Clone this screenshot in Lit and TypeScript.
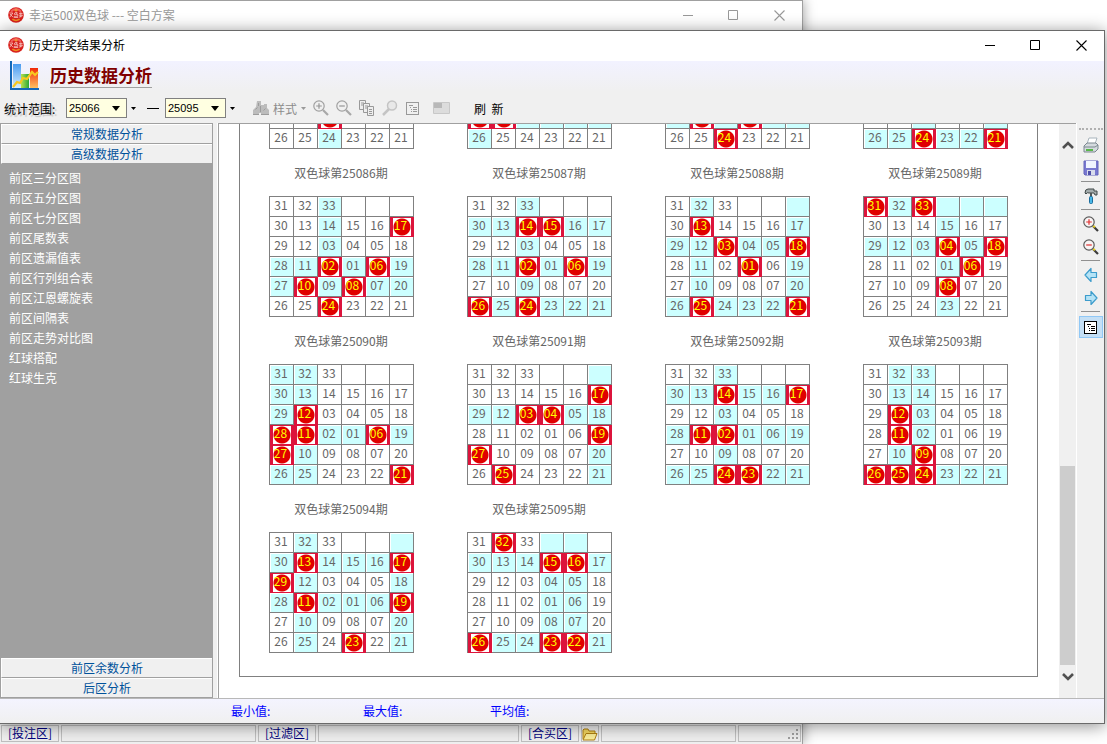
import { LitElement, html, css, svg } from "lit";
import { customElement, property } from "lit/decorators.js";

const BOARD: (number | null)[][] = [
  [31, 32, 33, null, null, null],
  [30, 13, 14, 15, 16, 17],
  [29, 12, 3, 4, 5, 18],
  [28, 11, 2, 1, 6, 19],
  [27, 10, 9, 8, 7, 20],
  [26, 25, 24, 23, 22, 21],
];

const DRAWS: { issue: string; balls: number[] }[] = [
  { issue: "25082", balls: [31, 14, 16, 12, 1, 9] },
  { issue: "25083", balls: [27, 10, 30, 3, 4, 19] },
  { issue: "25084", balls: [10, 8, 24, 30, 5, 19] },
  { issue: "25085", balls: [24, 21, 3, 17, 12, 1] },
  { issue: "25086", balls: [17, 2, 6, 10, 8, 24] },
  { issue: "25087", balls: [14, 15, 2, 6, 26, 24] },
  { issue: "25088", balls: [13, 3, 18, 1, 25, 21] },
  { issue: "25089", balls: [31, 33, 4, 18, 6, 8] },
  { issue: "25090", balls: [12, 28, 11, 6, 27, 21] },
  { issue: "25091", balls: [17, 3, 4, 19, 27, 25] },
  { issue: "25092", balls: [14, 17, 11, 2, 24, 23] },
  { issue: "25093", balls: [12, 11, 9, 26, 25, 24] },
  { issue: "25094", balls: [13, 17, 29, 11, 19, 23] },
  { issue: "25095", balls: [32, 15, 16, 26, 23, 22] },
];

const ITEMS = [
  "前区三分区图", "前区五分区图", "前区七分区图", "前区尾数表", "前区遗漏值表", "前区行列组合表",
  "前区江恩螺旋表", "前区间隔表", "前区走势对比图", "红球搭配", "红球生克",
];

const icon = (body: unknown, w = 16, h = 16) =>
  html`<svg width=${w} height=${h} viewBox="0 0 ${w} ${h}" aria-hidden="true">${body}</svg>`;

const logo = icon(svg`
  <circle cx="8" cy="8" r="7.8" fill="#d8201c"/>
  <path d="M3 4.6Q8-.6 13 4.6" fill="none" stroke="#f0605c" stroke-width="2"/>
  <path d="M6.3 3.2h3.4M8 1.8v3" stroke="#f6a03a" stroke-width="1"/>
  <path d="M1.4 6h3.4l-3 4.2M2 7l3 3.2M6.2 7.2l1-1.6h2l-.8 1.6M6.2 7.3h3.6v2H6.2v1.2h4M11 6.4h3.6M11 8.2h3.6M12.8 5.4v5M11 10.2l3.6-1.6" fill="none" stroke="#f6c9c4" stroke-width=".8"/>
  <path d="M4.4 12.2q3.6 2.6 7.2 0" fill="none" stroke="#f08a20" stroke-width="1.6"/>`);

const zoomIcon = (plus: boolean, dim: boolean) => icon(svg`
  <path d="M10 10l5 5" stroke=${dim ? "#a8a8a8" : "#3c3c3c"} stroke-width="2.2"/>
  ${dim ? "" : svg`<path d="M10.2 9.8l1.600 1.600" stroke="#e8d020" stroke-width="2"/>`}
  <circle cx="6" cy="6" r="5.200" fill=${dim ? "#f0f0f0" : "#f8f4f4"} stroke=${dim ? "#a0a0a0" : "#5a5a5a"} stroke-width="1.2"/>
  <path d=${plus ? "M3.2 6h5.6M6 3.2v5.6" : "M3.2 6h5.6"} stroke=${dim ? "#969696" : "#e03030"} stroke-width="1.2"/>`);

const listIcon = (c: string, bg: string) => icon(svg`
  <rect x="1.5" y="2.5" width="12" height="12" fill=${bg} stroke=${c}/>
  <path d="M4 5.5h4M5 7.5h1M8 7.5h4M6 9.5h1M8 9.5h4M8 11.5h4M6 11.5h1" stroke=${c}/>`);

const arrowIcon = (d: string) => icon(svg`<path d=${d} fill="#b5e3f6" stroke="#3c9ccc" stroke-width="1.2" stroke-linejoin="round"/>`);

const winButtons = html`
  <button aria-label="最小化">${icon(svg`<path d="M1 5.5h10" stroke="currentColor"/>`, 11, 11)}</button>
  <button aria-label="最大化">${icon(svg`<path d="M.5.5h9v9h-9z" fill="none" stroke="currentColor"/>`, 11, 11)}</button>
  <button aria-label="关闭">${icon(svg`<path d="M.5.5l10 10M10.5.5l-10 10" stroke="currentColor" stroke-width="1.1"/>`, 11, 11)}</button>`;

@customElement("draw-board")
class DrawBoard extends LitElement {
  @property() issue = "";
  @property({ attribute: false }) balls: number[] = [];

  static styles = css`
    :host { display: flex; flex-direction: column; align-items: center; color: #666; }
    .name { margin: 13px 0 12px; font-size: 12px; line-height: 22px; font-weight: 400; }
    .board { border-collapse: separate; border-spacing: 0; table-layout: fixed; width: 145px;
      border: solid #808080; border-width: 1px 0 0 1px; font-size: 12px; line-height: 16px; }
    .cell { box-sizing: border-box; width: 24px; height: 20px; padding: 0 0 3px; text-align: center;
      border: solid #808080; border-width: 0 1px 1px 0; background: #fff; }
    .lit { background: #cff; box-shadow: inset 1px 1px #fff; }
    .hit { background: #dc143c; border-color: #dc143c; padding: 1px 2px 0 3px; }
    .ball { display: block; height: 18px; line-height: 14px; color: #ff0; text-indent: -2px;
      background: radial-gradient(circle at center, #e00000 8px, #fff 9px); }
  `;

  render() {
    const hit = (n: number | null) => n !== null && this.balls.includes(n);
    const rows = BOARD.map((r) => r.filter(hit).length > 1);
    const cols = BOARD[0].map((_, c) => BOARD.filter((r) => hit(r[c])).length > 1);
    return html`
      <h2 class="name">双色球第${this.issue}期</h2>
      <table class="board"><tbody>
        ${BOARD.map((r, i) => html`<tr>${r.map((n, c) => {
          const label = n === null ? "" : String(n).padStart(2, "0");
          return hit(n)
            ? html`<td class="cell hit"><span class="ball">${label}</span></td>`
            : html`<td class="cell ${rows[i] || cols[c] ? "lit" : ""}">${label}</td>`;
        })}</tr>`)}
      </tbody></table>`;
  }
}

@customElement("app-root")
class AppRoot extends LitElement {
  static styles = css`
    :host { display: block; font-family: "Noto Sans CJK SC", sans-serif; font-size: 12px; }
    * { box-sizing: border-box; }
    svg { display: block; flex: none; }
    button { font: inherit; color: inherit; background: none; border: 0; padding: 0; margin: 0; }
    .desktop { display: grid; height: 100vh; min-height: 480px; background: #fff; overflow: hidden; }
    .back, .front { grid-area: 1 / 1; display: flex; flex-direction: column; min-width: 0; min-height: 0; }
    .back { width: 803px; border: solid #a0a0a0; border-width: 1px 1px 0 0; color: #999;
      justify-content: space-between; background: #f0f0f0; box-shadow: 0 0 12px rgba(0, 0, 0, .4); }
    .front { position: relative; margin: 30px 2px 20px 0; border: 1px solid #6a6a6a; border-left: 0;
      background: #f0f0f0; box-shadow: 0 2px 16px rgba(0, 0, 0, .45); }
    .titlebar { display: flex; align-items: center; height: 30px; flex: none; background: #fff; padding: 0 0 2px 8px; }
    .caption { flex: 1; margin: 0 0 0 5px; font-size: 12px; font-weight: 400; line-height: 18px; }
    .winbtns { display: flex; }
    .winbtns button { width: 46px; height: 28px; display: grid; place-items: center; }

    .header { flex: none; background: linear-gradient(#f2f2ff 0, #f0f0f0 30px); }
    .brand { display: flex; gap: 10px; padding-left: 10px; height: 30px; }
    .brand h1 { margin: 0; font-size: 17px; line-height: 28px; height: 27px; font-weight: 700; color: #800000; border-bottom: 1px solid #a0a0a0; }
    .tools { display: flex; align-items: center; height: 32px; padding: 2px 0 0 4px; }
    .label { width: 62px; text-shadow: 2px 2px 1px #c4c4c4; white-space: nowrap; }
    .pick { display: flex; align-items: center; }
    .pick select { appearance: none; width: 61px; height: 20px; border: 1px solid #808080; border-radius: 0; margin: 0;
      background: #ffffe1; padding: 0 2px; font: 11px "Liberation Sans", sans-serif; color: #000; }
    .pick svg { margin-left: -15px; pointer-events: none; }
    .pick button { margin-left: 11px; width: 6px; }
    .pick button svg, .style svg { margin: 0; }
    .dash { width: 12px; height: 1px; background: #000; margin: 0 6px 0 10px; }
    .faded { display: flex; align-items: center; gap: 7px; margin-left: 17px; color: #8c8c8c; }
    .style { display: flex; align-items: center; gap: 4px; }
    .refresh { margin-left: 24px; }

    .body { flex: 1; min-height: 0; display: grid; grid-template-columns: 213px 5px minmax(0, 1fr) 17px 1px 27px; }
    .side { display: flex; flex-direction: column; border: 1px solid #a0a0a0; background: #a0a0a0; min-height: 0; }
    .side .tab { flex: none; height: 20px; line-height: 18px; text-align: center; color: #00529b; background: #f0f0f0;
      border-top: 1px solid #fff; border-left: 1px solid #fff; border-bottom: 1px solid #a0a0a0; }
    .side .tab:last-child { border-bottom: 0; height: 19px; }
    .menu { flex: 1; list-style: none; margin: 0; padding: 4px 8px; overflow: hidden; }
    .menu a { display: block; line-height: 20px; color: #fff; text-decoration: none; }
    .split { border-right: 1px solid #fff; background: #f0f0f0; }
    .view { display: flex; flex-direction: column; justify-content: flex-end; overflow: hidden; background: #fff;
      border: solid #a0a0a0; border-width: 1px 0 0 1px; padding: 0 21px 21px 20px; min-height: 0; }
    .sheet { border: 1px solid #808080; padding: 0 3px 23px 2px; display: grid; grid-template-columns: repeat(4, 1fr); flex: none; }
    .scroll { display: flex; flex-direction: column; border-top: 1px solid #a0a0a0; padding: 13px 1px; align-items: center; }
    .scroll button { height: 16px; display: grid; place-items: center; }
    .gap { flex: 312; }
    .thumb { flex: 199; align-self: stretch; background: #cdcdcd; margin-bottom: 4px; }
    .white { background: #fff; }
    .rail { display: flex; flex-direction: column; align-items: center; gap: 3px; padding-top: 5px; }
    .dots { width: 24px; border-top: 2px dotted #b0b0b0; margin-bottom: 2px; }
    .rail button { height: 20px; width: 24px; display: grid; place-items: center; }
    .rail hr { width: 19px; height: 1px; border: 0; background: #909090; margin: 0 0 1px; }
    .rail .on { background: #c4dff5; border: 1px solid #90c8f6; height: 22px; }
    .summary { flex: none; display: flex; height: 25px; line-height: 24px; border-top: 1px solid #b8b8b8; padding-left: 231px;
      color: #00f; background: linear-gradient(#f4f4ff, #f0f0f0); }
    .summary span { width: 132px; }
    .summary span + span { width: 127px; }
    .status { display: flex; height: 19px; gap: 2px; padding: 0 1px; color: #000080; }
    .status > * { border: 1px solid #c0c0c0; height: 17px; line-height: 14px; white-space: nowrap; flex: none; }
    .zone { width: 58px; text-align: center; }
    .w1 { width: 195px; }
    .w2 { width: 201px; }
    .w3 { width: 18px; display: grid; place-items: center; }
    .w4 { flex: 1; }
    .w5 { width: 63px; display: flex; justify-content: flex-end; }
  `;

  private picker(id: string, value: string) {
    return html`<span class="pick">
      <select id=${id} aria-label=${"期号 " + value}><option>${value}</option></select>
      ${icon(svg`<path d="M0 0h8L4 5z"/>`, 8, 5)}
      <button aria-label="选择">${icon(svg`<path d="M0 1h5L2.500 4z"/>`, 5, 5)}</button>
    </span>`;
  }

  render() {
    const binoculars = icon(svg`<path d="M4 1h4v4h3V4h3v4l2 2v5H8v-2H6v2H0v-5l3-3z" fill="#bcbcbc"/><path d="M2.500 9.500l2-2M7.500 6v6M10.500 10.500l2-2M5.500 3v3M0 14.500h6M8 14.500h8" stroke="#9c9c9c"/>`);
    const pages = icon(svg`<g fill="#eee" stroke="#999"><path d="M.5.500h6v9h-6z"/><path d="M4.500 3.500h6v9h-6z"/><path d="M8.500 6.500h6v9h-6z"/></g><path d="M2 3h3M2 5h2M6 6h3M6 8h2M10 9.500h3M10 11.500h3M10 13.500h3" stroke="#999"/>`);
    return html`<div class="desktop">
      <section class="back">
        <header class="titlebar">${logo}<p class="caption">幸运500双色球 --- 空白方案</p><div class="winbtns">${winButtons}</div></header>
        <footer class="status">
          <span class="zone">[投注区]</span><span class="w1"></span>
          <span class="zone">[过滤区]</span><span class="w2"></span>
          <span class="zone">[合买区]</span>
          <span class="w3">${icon(svg`<path d="M1 12V3l1-1h4l1 2h6v3" fill="#f5d860" stroke="#b08010"/><path d="M1 13L4 6.500h11L12.500 13z" fill="#fbee9a" stroke="#b08010"/>`, 16, 14)}</span>
          <span class="w4"></span>
          <span class="w5">${icon(svg`<path d="M9 3h2v2H9zM9 7h2v2H9zM9 11h2v2H9zM5 7h2v2H5zM5 11h2v2H5zM1 11h2v2H1z" fill="#a0a0a0"/>`, 13, 14)}</span>
        </footer>
      </section>

      <section class="front">
        <header class="titlebar">${logo}<p class="caption">历史开奖结果分析</p><div class="winbtns">${winButtons}</div></header>
        <div class="header">
          <div class="brand">
            <svg width="30" height="30" viewBox="0 0 30 30" aria-hidden="true">
              <defs>
                <linearGradient id="b" x2="0" y2="1"><stop stop-color="#4a9cf0"/><stop offset="1" stop-color="#d8f0ff"/></linearGradient>
                <linearGradient id="g" x2="1"><stop stop-color="#b8e050"/><stop offset="1" stop-color="#28a838"/></linearGradient>
                <linearGradient id="r" x2="0" y2="1"><stop stop-color="#f02808"/><stop offset="1" stop-color="#ffc060"/></linearGradient>
              </defs>
              <path d="M3 3h8v24H3z" fill="url(#b)"/><path d="M11 13h8v14h-8z" fill="url(#g)"/><path d="M20 7h8v20h-8z" fill="url(#r)"/>
              <path d="M3 26l4-5 3 1 3-5 4 1 5-7 3 3 3-3" fill="none" stroke="#f8c820" stroke-width="2.200"/>
              <path d="M1 0v28h28" fill="none" stroke="#1468b8" stroke-width="2"/>
            </svg>
            <h1>历史数据分析</h1>
          </div>
          <div class="tools">
            <label class="label" for="from">统计范围:</label>
            ${this.picker("from", "25066")}<span class="dash"></span>${this.picker("to", "25095")}
            <div class="faded">
              <button class="style">${binoculars}样式${icon(svg`<path d="M0 1h5L2.500 4z" fill="#999"/>`, 5, 5)}</button>
              <button aria-label="放大">${zoomIcon(true, true)}</button>
              <button aria-label="缩小">${zoomIcon(false, true)}</button>
              <button aria-label="页面">${pages}</button>
              <button aria-label="查找">${icon(svg`<path d="M7 9l-6 6" stroke="#c4c4c4" stroke-width="2.500"/><circle cx="10" cy="5.500" r="4.500" fill="#e8e8e8" stroke="#c4c4c4" stroke-width="1.500"/>`)}</button>
              <button aria-label="列表">${listIcon("#999", "#f0f0f0")}</button>
              <button aria-label="图块">${icon(svg`<path d="M5.500 2.500h16v11h-16z" fill="#dcdcdc" stroke="#c8c8c8"/><path d="M6 3h8v5H6z" fill="#b8b8b8"/>`, 22, 16)}</button>
            </div>
            <button class="refresh">刷&nbsp; 新</button>
          </div>
        </div>

        <div class="body">
          <nav class="side">
            <button class="tab">常规数据分析</button>
            <button class="tab">高级数据分析</button>
            <ul class="menu">${ITEMS.map((t) => html`<li><a href="#">${t}</a></li>`)}</ul>
            <button class="tab">前区余数分析</button>
            <button class="tab">后区分析</button>
          </nav>
          <div class="split"></div>
          <main class="view"><div class="sheet">
            ${DRAWS.map((d) => html`<draw-board .issue=${d.issue} .balls=${d.balls}></draw-board>`)}
          </div></main>
          <div class="scroll">
            <button aria-label="向上">${icon(svg`<path d="M1 8l5-5 5 5" fill="none" stroke="#505050" stroke-width="2.600"/>`, 12, 10)}</button>
            <div class="gap"></div><div class="thumb"></div>
            <button aria-label="向下">${icon(svg`<path d="M1 2l5 5 5-5" fill="none" stroke="#505050" stroke-width="2.600"/>`, 12, 10)}</button>
          </div>
          <div class="white"></div>
          <div class="rail">
            <div class="dots"></div>
            <button aria-label="打印">${icon(svg`<path d="M4 7l2-6h8l-2 6z" fill="#fff" stroke="#a8b4bc"/><path d="M1 9l3-3h9l2 2v4l-3 3H1z" fill="#d4dade" stroke="#7c8890"/><path d="M1 10h11l3-2" fill="none" stroke="#7c8890"/><path d="M3 13h7" stroke="#58b848" stroke-width="2"/>`)}</button>
            <button aria-label="保存">${icon(svg`<path d="M1 1h14v14H2l-1-1z" fill="#7878d0" stroke="#6464bc"/><path d="M3 1h10v7H3z" fill="#f0f4ff"/><path d="M4 10h8v5H4z" fill="#d8dcec"/><path d="M5 11h3v4H5z" fill="#5050a8"/>`)}</button>
            <hr>
            <button aria-label="工具">${icon(svg`<path d="M2 5q0-4 3-4h6v2h3v4h-2L11 5H6Q4 4 3 6z" fill="#a4acac" stroke="#404848"/><path d="M8 5v5" stroke="#505858" stroke-width="2"/><rect x="6.500" y="8.500" width="3" height="7" rx="1" fill="#48b8e8" stroke="#1c6c9c"/>`)}</button>
            <hr>
            <button aria-label="放大">${zoomIcon(true, false)}</button>
            <button aria-label="缩小">${zoomIcon(false, false)}</button>
            <hr>
            <button aria-label="上一个">${arrowIcon("M2 8l6-6.500v4h5.500v5H8v4z")}</button>
            <button aria-label="下一个">${arrowIcon("M14 8L8 1.500v4H2.500v5H8v4z")}</button>
            <hr>
            <button class="on" aria-label="列表">${listIcon("#000", "#fff")}</button>
          </div>
        </div>
        <footer class="summary"><span>最小值:</span><span>最大值:</span><span>平均值:</span></footer>
      </section>
    </div>`;
  }
}
